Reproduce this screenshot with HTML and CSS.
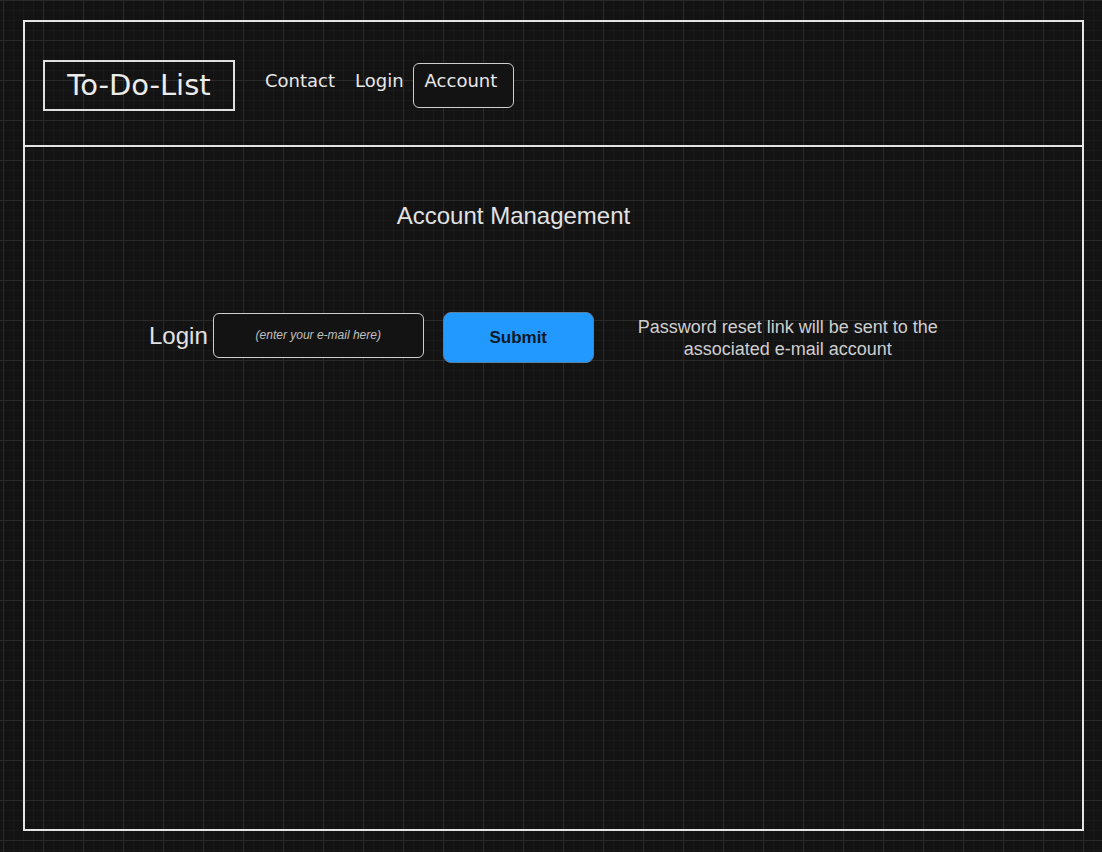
FILE: index.html
```html
<!DOCTYPE html>
<html lang="en">
<head>
<meta charset="utf-8">
<title>To-Do-List – Account</title>
<link rel="stylesheet" href="styles.css">
</head>
<body>
<div class="frame">
  <header class="header">
    <div class="logo">To-Do-List</div>
    <nav class="nav">
      <a class="nav-link nav-contact" href="#">Contact</a>
      <a class="nav-link nav-login" href="#">Login</a>
      <a class="nav-link nav-account" href="#">Account</a>
    </nav>
  </header>
  <main class="main">
    <h1 class="title">Account Management</h1>
    <form class="row">
      <label class="login-label" for="email">Login</label>
      <input class="email" id="email" type="email" placeholder="(enter your e-mail here)">
      <button class="submit" type="button">Submit</button>
      <p class="note">Password reset link will be sent to the associated e-mail account</p>
    </form>
  </main>
</div>
</body>
</html>
```
FILE: styles.css
```css
html, body {
  margin: 0;
  padding: 0;
}
body {
  width: 1102px;
  height: 852px;
  overflow: hidden;
  background-color: #131313;
  background-image:
    linear-gradient(to right, #2a2a2a 1px, transparent 1px),
    linear-gradient(to bottom, #2a2a2a 1px, transparent 1px),
    linear-gradient(to right, #191919 1px, transparent 1px),
    linear-gradient(to bottom, #191919 1px, transparent 1px);
  background-size: 40px 40px, 40px 40px, 10px 10px, 10px 10px;
  background-position: 3px 0, 0 0, 3px 0, 0 0;
  font-family: "DejaVu Sans", sans-serif;
  color: #e6e6e6;
}
.frame {
  box-sizing: border-box;
  margin: 20px 0 0 23px;
  width: 1061px;
  height: 811px;
  border: 2px solid #e4e4e4;
  display: flex;
  flex-direction: column;
}
.header {
  box-sizing: border-box;
  height: 125px;
  border-bottom: 2px solid #e4e4e4;
  display: flex;
  align-items: flex-start;
  padding: 38px 0 0 18px;
}
.logo {
  box-sizing: border-box;
  width: 192px;
  height: 51px;
  border: 2px solid #e0e0e0;
  font-size: 29px;
  line-height: 47px;
  text-align: center;
  color: #ececec;
}
.nav {
  display: flex;
  align-items: flex-start;
  margin: 3px 0 0 30px;
}
.nav-link {
  display: block;
  font-size: 18px;
  line-height: 22px;
  padding-top: 7px;
  color: #e8e8e8;
  text-decoration: none;
}
.nav-contact { margin-right: 20px; }
.nav-login { margin-right: 9px; }
.nav-account {
  box-sizing: border-box;
  width: 101px;
  height: 45px;
  padding: 6px 0 0 11px;
  border: 1px solid #cfcfcf;
  border-radius: 6px;
  background: #131313;
}
.main {
  flex: 1;
  padding-right: 80px;
}
.title {
  margin: 55px 0 0;
  font-family: "Liberation Sans", Arial, sans-serif;
  font-weight: normal;
  font-size: 24px;
  line-height: 28px;
  text-align: center;
  color: #e2e2e2;
}
.row {
  display: flex;
  align-items: flex-start;
  height: 51px;
  margin: 82px 0 0;
  padding-left: 124px;
  font-family: "Liberation Sans", Arial, sans-serif;
}
.login-label {
  font-size: 24px;
  line-height: 28px;
  margin-top: 10px;
  color: #e2e2e2;
  margin-right: 5px;
}
.email {
  box-sizing: border-box;
  width: 211px;
  height: 45px;
  margin: 1px 19px 0 0;
  padding: 0 0 2px;
  border: 1px solid #cfcfcf;
  border-radius: 6px;
  background: #131313;
  font-family: "Liberation Sans", Arial, sans-serif;
  font-size: 12px;
  font-style: italic;
  text-align: center;
  color: #c4c4c4;
}
.email::placeholder {
  color: #c0c0c0;
  opacity: 1;
}
.submit {
  box-sizing: border-box;
  width: 151px;
  height: 51px;
  border: 1px solid #5a7fa0;
  border-radius: 8px;
  background: #2299ff;
  font-family: "Liberation Sans", Arial, sans-serif;
  font-weight: bold;
  font-size: 17px;
  color: #0d1a28;
  padding: 0;
}
.note {
  width: 320px;
  margin: 4px 0 0 34px;
  font-size: 18px;
  line-height: 22px;
  text-align: center;
  color: #cfcfcf;
}
```
